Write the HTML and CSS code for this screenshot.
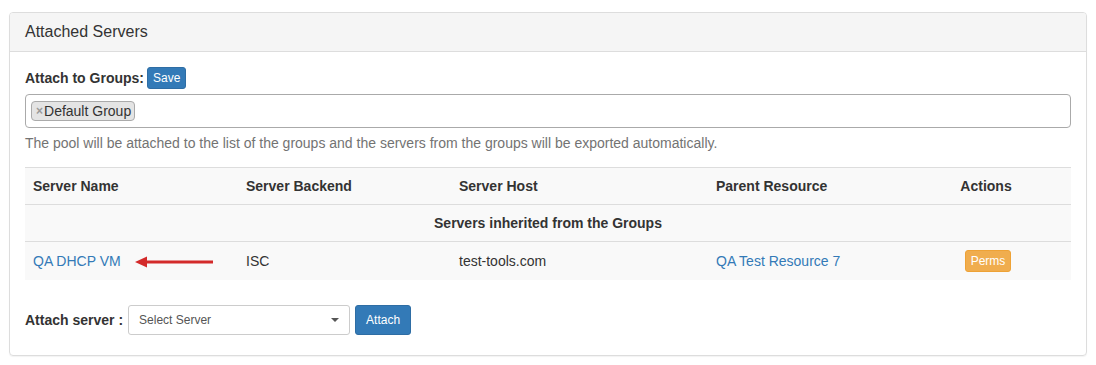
FILE: index.html
```html
<!DOCTYPE html>
<html lang="en">

<head>
  <meta charset="UTF-8">
  <meta name="viewport" content="width=device-width, initial-scale=1.0">
  <title>Attached Servers</title>
  <link rel="stylesheet" href="styles.css">
</head>

<body>

  <div class="page">
    <div class="panel">
      <div class="panel-heading">Attached Servers</div>

      <div class="panel-body">
        <div class="groups-label">
          <label>Attach to Groups:</label>
          <button class="btn btn-xs btn-primary">Save</button>
        </div>

        <div class="tag-box">
          <span class="tag"><span class="tag-remove">×</span>Default Group</span>
        </div>

        <p class="help-block">The pool will be attached to the list of the groups and the servers from the groups will be exported automatically.</p>

        <table class="servers">
          <thead>
            <tr>
              <th class="col-name">Server Name</th>
              <th class="col-backend">Server Backend</th>
              <th class="col-host">Server Host</th>
              <th class="col-parent">Parent Resource</th>
              <th class="col-actions">Actions</th>
            </tr>
          </thead>
          <tbody>
            <tr>
              <td colspan="5" class="group-title">Servers inherited from the Groups</td>
            </tr>
            <tr>
              <td>
                <a href="#">QA DHCP VM</a>
                <svg class="arrow" width="80" height="12" viewBox="0 0 80 12">
                  <path d="M10 6 H78" stroke="#d32a2a" stroke-width="3" />
                  <path d="M0 6 L12 0.5 L12 11.5 Z" fill="#d32a2a" />
                </svg>
              </td>
              <td>ISC</td>
              <td>test-tools.com</td>
              <td><a href="#">QA Test Resource 7</a></td>
              <td class="col-actions"><button class="btn btn-xs btn-warning">Perms</button></td>
            </tr>
          </tbody>
        </table>

        <div class="attach-row">
          <label>Attach server :</label>
          <div class="select-box">
            <span>Select Server</span>
            <span class="caret"></span>
          </div>
          <button class="btn btn-sm btn-primary">Attach</button>
        </div>
      </div>
    </div>
  </div>

</body>

</html>
```

FILE: styles.css
```css
* {
  box-sizing: border-box;
  margin: 0;
  padding: 0;
}

body {
  font-family: "Liberation Sans", Arial, sans-serif;
  font-size: 14px;
  line-height: 20px;
  color: #333;
  background: #fff;
}

.page {
  padding: 12px 9px;
}

.panel {
  border: 1px solid #ddd;
  border-radius: 4px;
  box-shadow: 0 1px 1px rgba(0, 0, 0, 0.05);
}

.panel-heading {
  background: #f5f5f5;
  border-bottom: 1px solid #ddd;
  border-radius: 3px 3px 0 0;
  padding: 10px 15px;
  font-size: 16px;
  line-height: 18px;
}

.panel-body {
  padding: 15px 15px 14px;
}

label {
  font-weight: bold;
}

.btn {
  font-family: "Liberation Sans", Arial, sans-serif;
  color: #fff;
  border: 1px solid transparent;
  cursor: pointer;
}

.btn-xs {
  font-size: 12px;
  line-height: 18px;
  padding: 1px 5px;
  border-radius: 3px;
}

.btn-sm {
  font-size: 12px;
  line-height: 18px;
  padding: 5px 10px;
  border-radius: 3px;
}

.btn-primary {
  background: #337ab7;
  border-color: #2e6da4;
}

.btn-warning {
  background: #f0ad4e;
  border-color: #eea236;
}

.groups-label {
  display: flex;
  align-items: center;
  gap: 3px;
  height: 22px;
  margin-bottom: 5px;
}

.tag-box {
  height: 34px;
  border: 1px solid #aaa;
  border-radius: 4px;
  padding: 5px 5px;
  display: flex;
  align-items: center;
}

.tag {
  display: inline-flex;
  align-items: center;
  height: 20px;
  background: #e4e4e4;
  border: 1px solid #aaa;
  border-radius: 4px;
  padding: 0 3px 0 4px;
  line-height: 18px;
}

.tag-remove {
  color: #999;
  font-weight: bold;
  font-size: 12px;
  margin-right: 1px;
}

.help-block {
  color: #737373;
  margin: 5px 0 14px;
}

.servers {
  width: 100%;
  border-collapse: collapse;
  margin-bottom: 25px;
}

.servers th,
.servers td {
  text-align: left;
  padding: 8px;
  line-height: 20px;
  border-top: 1px solid #ddd;
  background: #f9f9f9;
  vertical-align: middle;
}

.col-name {
  width: 213px;
}

.col-backend {
  width: 213px;
}

.col-host {
  width: 257px;
}

.col-parent {
  width: 193px;
}

.servers .col-actions {
  text-align: center;
}

.servers .col-actions .btn {
  margin-left: 4px;
}

.servers .group-title {
  text-align: center;
  font-weight: bold;
}

a {
  color: #337ab7;
  text-decoration: none;
}

.arrow {
  vertical-align: middle;
  margin-left: 10px;
}

.attach-row {
  display: flex;
  align-items: center;
  gap: 5px;
  height: 30px;
  margin-bottom: 6px;
}

.select-box {
  width: 222px;
  height: 30px;
  border: 1px solid #ccc;
  border-radius: 3px;
  display: flex;
  align-items: center;
  justify-content: space-between;
  padding: 0 10px;
  font-size: 12px;
  color: #555;
}

.caret {
  width: 0;
  height: 0;
  border-left: 4px solid transparent;
  border-right: 4px solid transparent;
  border-top: 4px solid #555;
}
```
